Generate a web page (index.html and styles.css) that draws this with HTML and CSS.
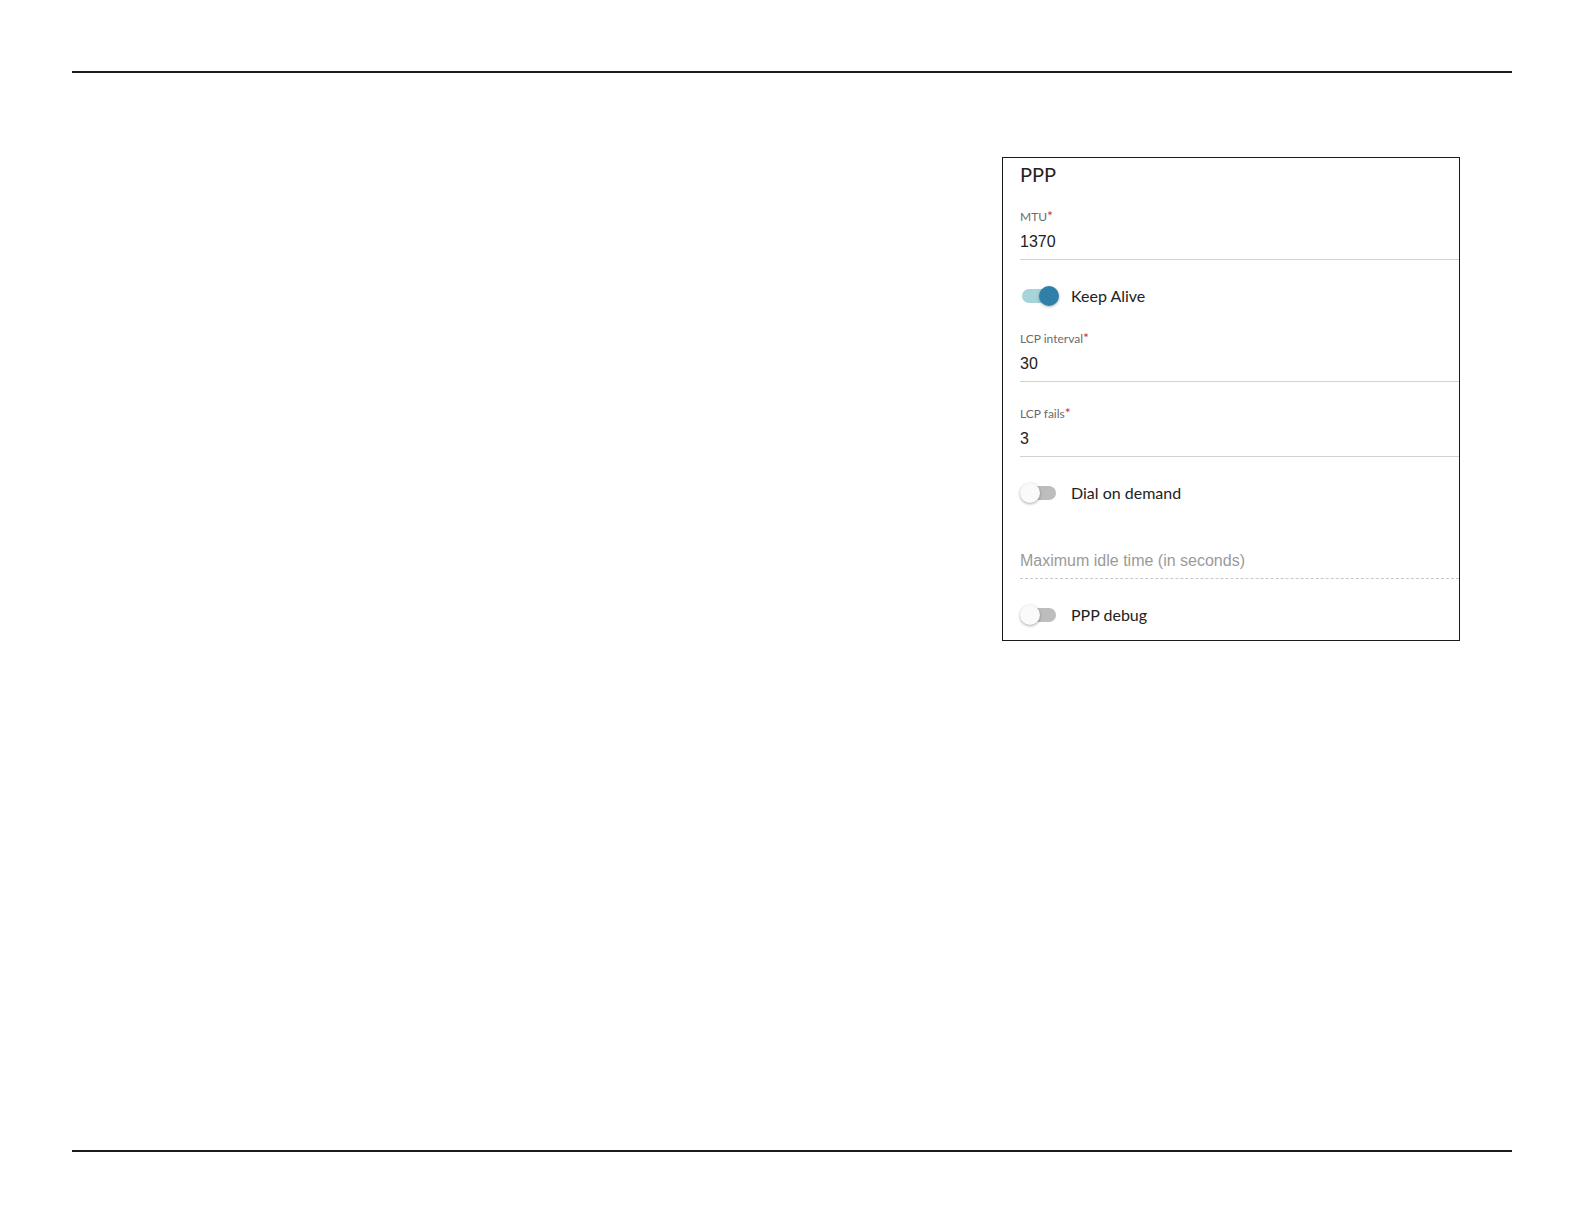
FILE: index.html
```html
<!DOCTYPE html>
<html lang="en">
<head>
<meta charset="utf-8">
<title>PPP</title>
<link rel="stylesheet" href="styles.css">
</head>
<body>
<div class="page">
  <div class="rule rule-top"></div>
  <div class="content">
    <section class="card">
      <h2 class="card-title">PPP</h2>

      <div class="field">
        <div class="field-label">MTU<span class="req">*</span></div>
        <div class="field-value">1370</div>
      </div>

      <div class="switch-row">
        <span class="switch on"><span class="track"></span><span class="knob"></span></span>
        <span class="switch-text">Keep Alive</span>
      </div>

      <div class="field">
        <div class="field-label">LCP interval<span class="req">*</span></div>
        <div class="field-value">30</div>
      </div>

      <div class="field">
        <div class="field-label">LCP fails<span class="req">*</span></div>
        <div class="field-value">3</div>
      </div>

      <div class="switch-row">
        <span class="switch"><span class="track"></span><span class="knob"></span></span>
        <span class="switch-text">Dial on demand</span>
      </div>

      <div class="field disabled">
        <div class="field-label"></div>
        <div class="field-value placeholder">Maximum idle time (in seconds)</div>
      </div>

      <div class="switch-row">
        <span class="switch"><span class="track"></span><span class="knob"></span></span>
        <span class="switch-text">PPP debug</span>
      </div>
    </section>
  </div>
  <div class="rule rule-bottom"></div>
</div>
</body>
</html>
```
FILE: styles.css
```css
html, body {
  margin: 0;
  padding: 0;
  background: #ffffff;
}

.page {
  padding: 0 72px;
}

.rule {
  height: 2px;
  background: #1c1c1c;
}

.rule-top {
  margin-top: 71px;
}

.content {
  box-sizing: border-box;
  height: 1077px;
  padding-top: 84px;
}

.card {
  box-sizing: border-box;
  width: 458px;
  margin: 0 0 0 930px;
  border: 1px solid #1a1a1a;
  padding: 4px 0 12px 17px;
  font-family: "Lato", "Liberation Sans", sans-serif;
  color: #222;
}

.card-title {
  margin: 0;
  font-weight: 400;
  font-size: 20px;
  line-height: 24px;
  color: #222;
}

.field {
  margin-top: 22px;
  padding-bottom: 7px;
  border-bottom: 1px solid #d2d2d2;
}

.field + .field {
  margin-top: 23px;
}

.field.disabled {
  border-bottom: 1px dashed #c8c8c8;
}

.field-label {
  height: 16px;
  font-size: 12px;
  line-height: 16px;
  color: #6b6b6b;
}

.req {
  color: #d0312d;
  font-size: 14px;
}

.field-value {
  margin-top: 8px;
  height: 20px;
  font-family: "Liberation Sans", Arial, sans-serif;
  font-size: 16px;
  line-height: 20px;
  color: #222;
}

.field-value.placeholder {
  color: #9a9a9a;
}

.switch-row {
  margin: 24px 0 1px;
  height: 24px;
  display: flex;
  align-items: center;
  gap: 15px;
}

.switch {
  position: relative;
  width: 36px;
  height: 24px;
  flex: none;
}

.switch .track {
  position: absolute;
  left: 2px;
  top: 5px;
  width: 34px;
  height: 14px;
  border-radius: 7px;
  background: #bdbdbd;
}

.switch .knob {
  position: absolute;
  left: 0;
  top: 2px;
  width: 20px;
  height: 20px;
  border-radius: 50%;
  background: #fafafa;
  box-shadow: 0 1px 3px rgba(0, 0, 0, 0.35);
}

.switch.on .track {
  background: #a6d4da;
}

.switch.on .knob {
  left: 19px;
  background: #2f7fa8;
  box-shadow: 0 1px 3px rgba(0, 0, 0, 0.3);
}

.switch-text {
  font-size: 16px;
  line-height: 24px;
  color: #222;
}
```
